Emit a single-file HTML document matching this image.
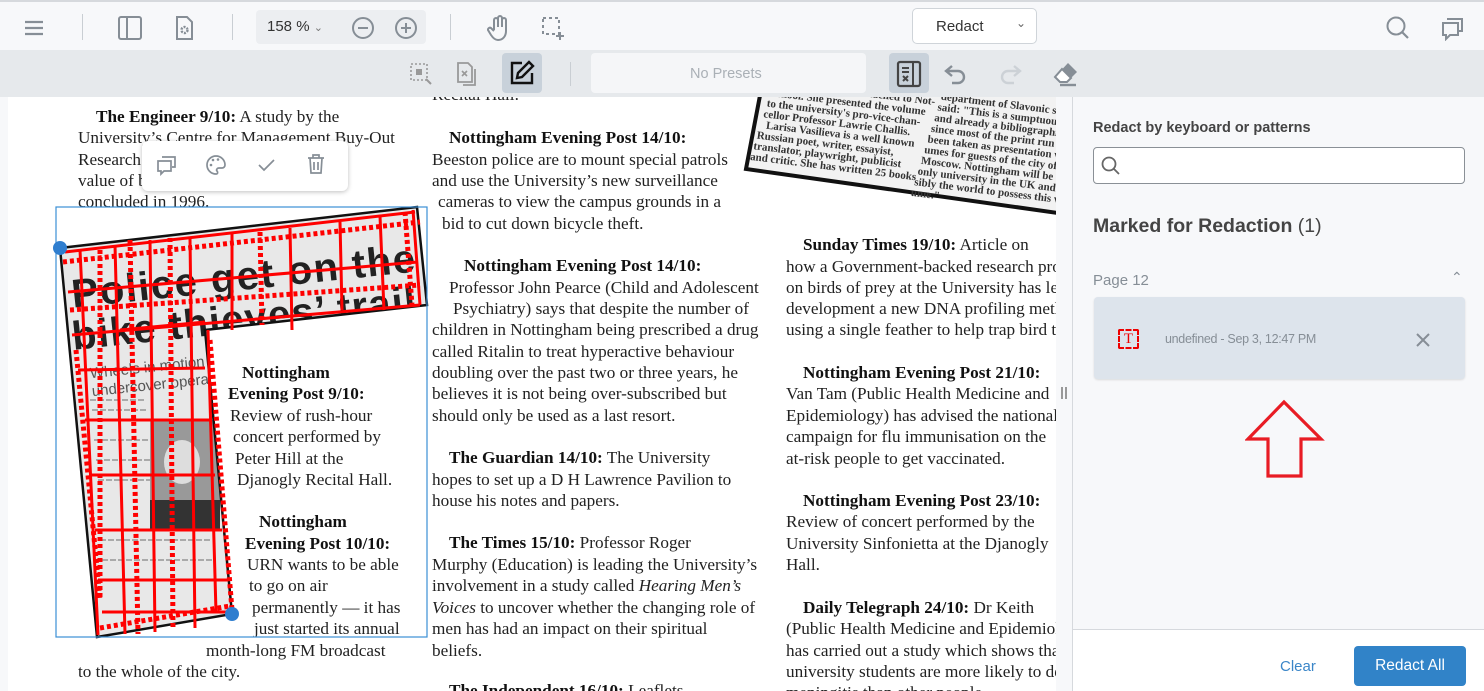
<!DOCTYPE html>
<html><head><meta charset="utf-8">
<style>
*{margin:0;padding:0;box-sizing:border-box}
body{width:1484px;height:691px;overflow:hidden;background:#f7f8fa;font-family:"Liberation Sans",sans-serif;position:relative}
.top{position:absolute;left:0;top:0;width:1484px;height:50px;background:#f7f8fa;border-top:2px solid #d6d9dd}
.sub{position:absolute;left:0;top:50px;width:1484px;height:47px;background:#e6e9ec}
.ic{position:absolute}
.sep{position:absolute;width:1px;background:#c9ced3}
.page{position:absolute;left:8px;top:97px;width:1048px;height:594px;background:#fff;overflow:hidden}
.l{position:absolute;white-space:nowrap;font-family:"Liberation Serif",serif;font-size:17.2px;line-height:21px;color:#222}
.l b{color:#111}
.panel{position:absolute;left:1072px;top:97px;width:412px;height:594px;background:#f7f8fa;border-left:1px solid #d6d9dd}
</style></head><body>
<div class="top">
 <svg class="ic" style="left:22px;top:14px" width="24" height="24" viewBox="0 0 24 24"><path d="M3 6h18M3 12h18M3 18h18" stroke="#868e96" stroke-width="2.2"/></svg>
 <div class="sep" style="left:82px;top:12px;height:26px"></div>
 <svg class="ic" style="left:117px;top:13px" width="26" height="26" viewBox="0 0 26 26"><rect x="2" y="2" width="22" height="22" rx="2" fill="none" stroke="#868e96" stroke-width="2"/><path d="M10 2v22" stroke="#868e96" stroke-width="2"/></svg>
 <svg class="ic" style="left:172px;top:13px" width="24" height="26" viewBox="0 0 24 26"><path d="M5 2h10l5 5v17H5z" fill="none" stroke="#868e96" stroke-width="2"/><circle cx="12.5" cy="15" r="3" fill="none" stroke="#868e96" stroke-width="2.4" stroke-dasharray="2 1.2"/></svg>
 <div class="sep" style="left:232px;top:12px;height:26px"></div>
 <div style="position:absolute;left:256px;top:8px;width:170px;height:34px;background:#eceef1;border-radius:4px"></div>
 <div style="position:absolute;left:267px;top:16px;font-size:15px;color:#333">158 % <span style="font-size:11px;color:#777">&#8964;</span></div>
 <svg class="ic" style="left:351px;top:14px" width="24" height="24" viewBox="0 0 24 24"><circle cx="12" cy="12" r="10" fill="none" stroke="#868e96" stroke-width="2"/><path d="M7 12h10" stroke="#868e96" stroke-width="2"/></svg>
 <svg class="ic" style="left:394px;top:14px" width="24" height="24" viewBox="0 0 24 24"><circle cx="12" cy="12" r="10" fill="none" stroke="#868e96" stroke-width="2"/><path d="M7 12h10M12 7v10" stroke="#868e96" stroke-width="2"/></svg>
 <div class="sep" style="left:450px;top:12px;height:26px"></div>
 <svg class="ic" style="left:486px;top:12px" width="26" height="28" viewBox="0 0 26 28"><path d="M8 16V6a2 2 0 014 0v7V4a2 2 0 014 0v9V6a2 2 0 014 0v11c0 5-3 9-8 9-3 0-5-2-7-5l-3-5a2 2 0 013-2l3 3" fill="none" stroke="#868e96" stroke-width="2"/></svg>
 <svg class="ic" style="left:540px;top:13px" width="26" height="26" viewBox="0 0 26 26"><path d="M3 3h16v16H3z" fill="none" stroke="#868e96" stroke-width="2" stroke-dasharray="3 3"/><path d="M20 17v8M16 21h8" stroke="#868e96" stroke-width="2"/></svg>
 <div style="position:absolute;left:912px;top:6px;width:125px;height:36px;background:#fff;border:1px solid #cfd4d9;border-radius:5px"></div>
 <div style="position:absolute;left:936px;top:16px;font-size:15px;color:#333">Redact</div>
 <div style="position:absolute;left:1016px;top:14px;font-size:12px;color:#666">&#8964;</div>
 <svg class="ic" style="left:1385px;top:13px" width="26" height="26" viewBox="0 0 26 26"><circle cx="11" cy="11" r="8.5" fill="none" stroke="#868e96" stroke-width="2"/><path d="M17 17l6 6" stroke="#868e96" stroke-width="2.2"/></svg>
 <svg class="ic" style="left:1440px;top:13px" width="26" height="26" viewBox="0 0 26 26"><path d="M7 4h15v12h-4M3 8h15v12H10l-4 4v-4H3z" fill="none" stroke="#868e96" stroke-width="2"/></svg>
</div>
<div class="sub">
 <svg class="ic" style="left:409px;top:12px" width="24" height="24" viewBox="0 0 24 24"><path d="M2 2h16v16H2z" fill="none" stroke="#999" stroke-width="1.6" stroke-dasharray="2 2"/><rect x="7" y="7" width="6" height="6" fill="#999"/><path d="M17 17l5 5" stroke="#999" stroke-width="2"/></svg>
 <svg class="ic" style="left:455px;top:11px" width="24" height="26" viewBox="0 0 24 26"><path d="M3 2h10l4 4v15H3z" fill="none" stroke="#999" stroke-width="1.8"/><path d="M7 10l5 5M12 10l-5 5" stroke="#999" stroke-width="1.6"/><path d="M20 8v16H8" fill="none" stroke="#999" stroke-width="1.8"/></svg>
 <div style="position:absolute;left:502px;top:3px;width:40px;height:40px;background:#c8d1da;border-radius:4px"></div>
 <svg class="ic" style="left:508px;top:9px" width="28" height="28" viewBox="0 0 28 28"><path d="M14 4H4v20h20V14" fill="none" stroke="#111" stroke-width="2.4"/><path d="M21 3l4 4-11 11-5 1 1-5z" fill="none" stroke="#111" stroke-width="2.4"/></svg>
 <div class="sep" style="left:570px;top:12px;height:24px"></div>
 <div style="position:absolute;left:591px;top:3px;width:275px;height:40px;background:#f5f6f8;border-radius:4px"></div>
 <div style="position:absolute;left:690px;top:16px;font-size:14.5px;color:#aab0b6">No Presets</div>
 <div style="position:absolute;left:889px;top:3px;width:40px;height:40px;background:#c8d1da;border-radius:4px"></div>
 <svg class="ic" style="left:896px;top:10px" width="26" height="28" viewBox="0 0 26 28"><rect x="2" y="2" width="22" height="24" rx="2" fill="none" stroke="#444" stroke-width="2.2"/><path d="M17 2v24M6 8h7M6 12h7M7 16l5 5M12 16l-5 5" stroke="#444" stroke-width="2"/></svg>
 <svg class="ic" style="left:943px;top:12px" width="26" height="24" viewBox="0 0 26 24"><path d="M9 4L3 9l6 5M3 9h12a6 6 0 010 12H9" fill="none" stroke="#868e96" stroke-width="2.4"/></svg>
 <svg class="ic" style="left:997px;top:12px" width="26" height="24" viewBox="0 0 26 24"><path d="M17 4l6 5-6 5M23 9H11a6 6 0 000 12h6" fill="none" stroke="#ccd1d6" stroke-width="2.4"/></svg>
 <svg class="ic" style="left:1052px;top:10px" width="28" height="28" viewBox="0 0 28 28"><path d="M16 3l9 9-10 10H8l-5-5z" fill="#868e96"/><path d="M3 17l5 5h7l4-4-9-9z" fill="#fff" stroke="#868e96" stroke-width="2"/><path d="M8 25h16" stroke="#868e96" stroke-width="2.4"/></svg>
</div>

<div class="page">
 <div class="l" style="left:88px;top:9px"><b>The Engineer 9/10:</b> A study by the</div>
 <div class="l" style="left:70px;top:30px">University’s Centre for Management Buy-Out</div>
 <div class="l" style="left:70px;top:52px">Research output performance and</div>
 <div class="l" style="left:70px;top:73px">value of buy-outs which were</div>
 <div class="l" style="left:70px;top:94px">concluded in 1996.</div>
 <div class="l" style="left:234px;top:265px"><b>Nottingham</b></div>
 <div class="l" style="left:220px;top:286px"><b>Evening Post 9/10:</b></div>
 <div class="l" style="left:222px;top:308px">Review of rush-hour</div>
 <div class="l" style="left:225px;top:329px">concert performed by</div>
 <div class="l" style="left:227px;top:351px">Peter Hill at the</div>
 <div class="l" style="left:229px;top:372px">Djanogly Recital Hall.</div>
 <div class="l" style="left:251px;top:414px"><b>Nottingham</b></div>
 <div class="l" style="left:237px;top:436px"><b>Evening Post 10/10:</b></div>
 <div class="l" style="left:239px;top:457px">URN wants to be able</div>
 <div class="l" style="left:241px;top:478px">to go on air</div>
 <div class="l" style="left:244px;top:500px">permanently — it has</div>
 <div class="l" style="left:246px;top:521px">just started its annual</div>
 <div class="l" style="left:198px;top:543px">month-long FM broadcast</div>
 <div class="l" style="left:70px;top:564px">to the whole of the city.</div>

 <div class="l" style="left:424px;top:-13px">Recital Hall.</div>
 <div class="l" style="left:441px;top:30px"><b>Nottingham Evening Post 14/10:</b></div>
 <div class="l" style="left:424px;top:52px">Beeston police are to mount special patrols</div>
 <div class="l" style="left:424px;top:73px">and use the University’s new surveillance</div>
 <div class="l" style="left:430px;top:94px">cameras to view the campus grounds in a</div>
 <div class="l" style="left:434px;top:116px">bid to cut down bicycle theft.</div>
 <div class="l" style="left:456px;top:158px"><b>Nottingham Evening Post 14/10:</b></div>
 <div class="l" style="left:441px;top:180px">Professor John Pearce (Child and Adolescent</div>
 <div class="l" style="left:445px;top:201px">Psychiatry) says that despite the number of</div>
 <div class="l" style="left:424px;top:222px">children in Nottingham being prescribed a drug</div>
 <div class="l" style="left:424px;top:244px">called Ritalin to treat hyperactive behaviour</div>
 <div class="l" style="left:424px;top:265px">doubling over the past two or three years, he</div>
 <div class="l" style="left:424px;top:286px">believes it is not being over-subscribed but</div>
 <div class="l" style="left:424px;top:308px">should only be used as a last resort.</div>
 <div class="l" style="left:441px;top:350px"><b>The Guardian 14/10:</b> The University</div>
 <div class="l" style="left:424px;top:372px">hopes to set up a D H Lawrence Pavilion to</div>
 <div class="l" style="left:424px;top:393px">house his notes and papers.</div>
 <div class="l" style="left:441px;top:435px"><b>The Times 15/10:</b> Professor Roger</div>
 <div class="l" style="left:424px;top:457px">Murphy (Education) is leading the University’s</div>
 <div class="l" style="left:424px;top:478px">involvement in a study called <i>Hearing Men’s</i></div>
 <div class="l" style="left:424px;top:500px"><i>Voices</i> to uncover whether the changing role of</div>
 <div class="l" style="left:424px;top:521px">men has had an impact on their spiritual</div>
 <div class="l" style="left:424px;top:543px">beliefs.</div>
 <div class="l" style="left:441px;top:583px"><b>The Independent 16/10:</b> Leaflets</div>

 <svg style="position:absolute;left:732px;top:-2px" width="320" height="120" viewBox="0 0 320 120">
  <path d="M22 -10L320 -10 318 118 6 74z" fill="#f2f2f2" stroke="#111" stroke-width="4"/>
  <g font-family="Liberation Serif,serif" font-size="11" font-weight="bold" fill="#333" transform="rotate(7 160 40)">
   <text x="30" y="6">ingham Professor attached to Not-</text>
   <text x="26" y="17">School. She presented the volume</text>
   <text x="24" y="28">to the university's pro-vice-chan-</text>
   <text x="22" y="39">cellor Professor Lawrie Challis.</text>
   <text x="26" y="50">Larisa Vasilieva is a well known</text>
   <text x="18" y="61">Russian poet, writer, essayist,</text>
   <text x="16" y="72">translator, playwright, publicist</text>
   <text x="14" y="83">and critic. She has written 25 books</text>
   <text x="196" y="0">department of Slavonic studies</text>
   <text x="194" y="11">said: "This is a sumptuous volume</text>
   <text x="192" y="22">and already a bibliographic rarity</text>
   <text x="190" y="33">since most of the print run has</text>
   <text x="188" y="44">been taken as presentation vol-</text>
   <text x="186" y="55">umes for guests of the city of</text>
   <text x="184" y="66">Moscow. Nottingham will be the</text>
   <text x="182" y="77">only university in the UK and pos-</text>
   <text x="180" y="88">sibly the world to possess this vol-</text>
   <text x="178" y="99">ume."</text>
  </g>
 </svg>
 <div class="l" style="left:795px;top:137px"><b>Sunday Times 19/10:</b> Article on</div>
 <div class="l" style="left:778px;top:159px">how a Government-backed research project</div>
 <div class="l" style="left:778px;top:180px">on birds of prey at the University has led to</div>
 <div class="l" style="left:778px;top:201px">development a new DNA profiling method</div>
 <div class="l" style="left:778px;top:222px">using a single feather to help trap bird thieves</div>
 <div class="l" style="left:795px;top:265px"><b>Nottingham Evening Post 21/10:</b></div>
 <div class="l" style="left:778px;top:286px">Van Tam (Public Health Medicine and</div>
 <div class="l" style="left:778px;top:308px">Epidemiology) has advised the national</div>
 <div class="l" style="left:778px;top:329px">campaign for flu immunisation on the</div>
 <div class="l" style="left:778px;top:351px">at-risk people to get vaccinated.</div>
 <div class="l" style="left:795px;top:393px"><b>Nottingham Evening Post 23/10:</b></div>
 <div class="l" style="left:778px;top:414px">Review of concert performed by the</div>
 <div class="l" style="left:778px;top:436px">University Sinfonietta at the Djanogly</div>
 <div class="l" style="left:778px;top:457px">Hall.</div>
 <div class="l" style="left:795px;top:500px"><b>Daily Telegraph 24/10:</b> Dr Keith</div>
 <div class="l" style="left:778px;top:521px">(Public Health Medicine and Epidemiology)</div>
 <div class="l" style="left:778px;top:543px">has carried out a study which shows that</div>
 <div class="l" style="left:778px;top:564px">university students are more likely to develop</div>
 <div class="l" style="left:778px;top:585px">meningitis than other people</div>

 <svg style="position:absolute;left:0;top:0" width="440" height="594" viewBox="8 97 440 594">
  <defs><clipPath id="cp"><path d="M60 248L417 207 427 305 205 330 232 614 97 637z"/></clipPath></defs>
  <path d="M60 248L417 207 427 305 205 330 232 614 97 637z" fill="#e8e8e8"/>
  <g clip-path="url(#cp)">
   <g font-family="Liberation Sans,sans-serif" font-weight="bold" fill="#222" transform="rotate(-6 240 270)">
    <text x="70" y="290" font-size="40" textLength="345">Police get on the</text>
    <text x="66" y="332" font-size="40" textLength="345">bike thieves’ trail</text>
    <text x="80" y="362" font-size="15" font-weight="normal" fill="#555">Wheels in motion for</text>
    <text x="80" y="380" font-size="15" font-weight="normal" fill="#555">undercover operation</text>
   </g>
   <g stroke="#aaa" stroke-width="2" stroke-dasharray="6 2">
    <path d="M90 400h55M92 410h55M94 440h55M96 460h55M98 480h55M100 540h110M102 560h110M104 580h110"/>
   </g>
   <rect x="150" y="420" width="70" height="110" fill="#999"/>
   <ellipse cx="182" cy="462" rx="18" ry="22" fill="#ddd"/>
   <rect x="150" y="500" width="70" height="30" fill="#333"/>
  </g>
  <path d="M60 248L417 207 427 305 205 330 232 614 97 637z" fill="none" stroke="#111" stroke-width="2.5"/>
  <g fill="none" stroke="#f00" stroke-width="3">
   <path d="M65 252L415 212M68 292L418 262M72 335L420 305M120 330L205 322M78 370L205 368M85 420L210 420M90 475L215 475M95 530L222 530M98 580L228 580M102 612L232 612"/>
   <path d="M80 250L98 635M115 245L125 634M150 240L155 632M190 238L195 628M232 234L232 330M290 228L292 330M340 222L342 310M380 216L384 310M413 210L420 305M208 330L216 612"/>
   <path d="M100 250L100 600M170 238L173 630M130 240L138 634M405 212L412 305M260 232L262 325" stroke-dasharray="4 3" stroke-width="5"/>
   <path d="M63 262L420 222M70 310L420 285M210 340L232 610M76 350L100 600M100 628L230 606" stroke-dasharray="4 3" stroke-width="5"/>
  </g>
  <rect x="56" y="207" width="371" height="430" fill="none" stroke="#3b8fd6" stroke-width="1.2"/>
  <circle cx="60" cy="248" r="7" fill="#2f7ecf"/>
  <circle cx="232" cy="614" r="7" fill="#2f7ecf"/>
 </svg>
 <div style="position:absolute;left:134px;top:44px;width:206px;height:50px;background:#fff;border-radius:6px;box-shadow:0 1px 5px rgba(0,0,0,.25)"></div>
 <svg class="ic" style="left:148px;top:57px" width="22" height="22" viewBox="0 0 22 22"><path d="M6 3h13v10h-3M2 7h13v10H8l-3 3v-3H2z" fill="none" stroke="#868e96" stroke-width="1.7"/></svg>
 <svg class="ic" style="left:197px;top:57px" width="22" height="22" viewBox="0 0 22 22"><path d="M11 2a9 9 0 100 18c2 0 2-2 1-3s0-3 2-3h3a3 3 0 003-3c0-5-4-9-9-9z" fill="none" stroke="#868e96" stroke-width="1.7"/><circle cx="6" cy="11" r="1.3" fill="#868e96"/><circle cx="8" cy="6" r="1.3" fill="#868e96"/><circle cx="13" cy="5.5" r="1.3" fill="#868e96"/></svg>
 <svg class="ic" style="left:248px;top:58px" width="20" height="20" viewBox="0 0 20 20"><path d="M3 10l5 5 10-10" fill="none" stroke="#868e96" stroke-width="1.7"/></svg>
 <svg class="ic" style="left:298px;top:56px" width="20" height="22" viewBox="0 0 20 22"><path d="M2 5h16M7 5V2h6v3M4 5l1 15h10l1-15M8 9v8M12 9v8" fill="none" stroke="#868e96" stroke-width="1.7"/></svg>
</div>
<div style="position:absolute;left:1061px;top:387px;width:2px;height:12px;background:#999"></div>
<div style="position:absolute;left:1065px;top:387px;width:2px;height:12px;background:#999"></div>

<div class="panel">
 <div style="position:absolute;left:20px;top:23px;font-size:14.5px;font-weight:bold;color:#444">Redact by keyboard or patterns</div>
 <div style="position:absolute;left:20px;top:50px;width:372px;height:37px;background:#fff;border:1px solid #8a9096;border-radius:4px"></div>
 <svg class="ic" style="left:28px;top:59px" width="20" height="20" viewBox="0 0 20 20"><circle cx="8" cy="8" r="6.5" fill="none" stroke="#666" stroke-width="1.8"/><path d="M13 13l5 5" stroke="#666" stroke-width="1.8"/></svg>
 <div style="position:absolute;left:20px;top:118px;font-size:19.5px;font-weight:bold;color:#444">Marked for Redaction <span style="font-weight:normal">(1)</span></div>
 <div style="position:absolute;left:20px;top:175px;font-size:15px;color:#868e96">Page 12</div>
 <div style="position:absolute;left:378px;top:172px;font-size:14px;color:#868e96">&#8963;</div>
 <div style="position:absolute;left:21px;top:200px;width:371px;height:82px;background:#dde4ec;border-radius:4px;box-shadow:0 1px 2px rgba(0,0,0,.12)"></div>
 <div style="position:absolute;left:45px;top:232px;width:21px;height:20px;border:2px dashed #e00;border-radius:2px;font-family:'Liberation Serif',serif;color:#e00;font-size:15px;text-align:center;line-height:16px">T</div>
 <div style="position:absolute;left:92px;top:235px;font-size:12.5px;color:#868e96;letter-spacing:-.3px">undefined - Sep 3, 12:47 PM</div>
 <svg class="ic" style="left:342px;top:235px" width="16" height="16" viewBox="0 0 16 16"><path d="M2 2l12 12M14 2L2 14" stroke="#868e96" stroke-width="2"/></svg>
 <svg class="ic" style="left:172px;top:302px" width="80" height="82" viewBox="0 0 80 82"><path d="M39 3L3 40h20v37h33V40h20z" fill="none" stroke="#e81c24" stroke-width="3.2"/></svg>
 <div style="position:absolute;left:0;top:532px;width:412px;height:62px;background:#fff;border-top:1px solid #d6d9dd"></div>
 <div style="position:absolute;left:207px;top:561px;font-size:15px;color:#3b86c8">Clear</div>
 <div style="position:absolute;left:281px;top:549px;width:112px;height:40px;background:#3183c8;border-radius:4px;color:#fff;font-size:15.5px;text-align:center;line-height:40px">Redact All</div>
</div>
</body></html>
